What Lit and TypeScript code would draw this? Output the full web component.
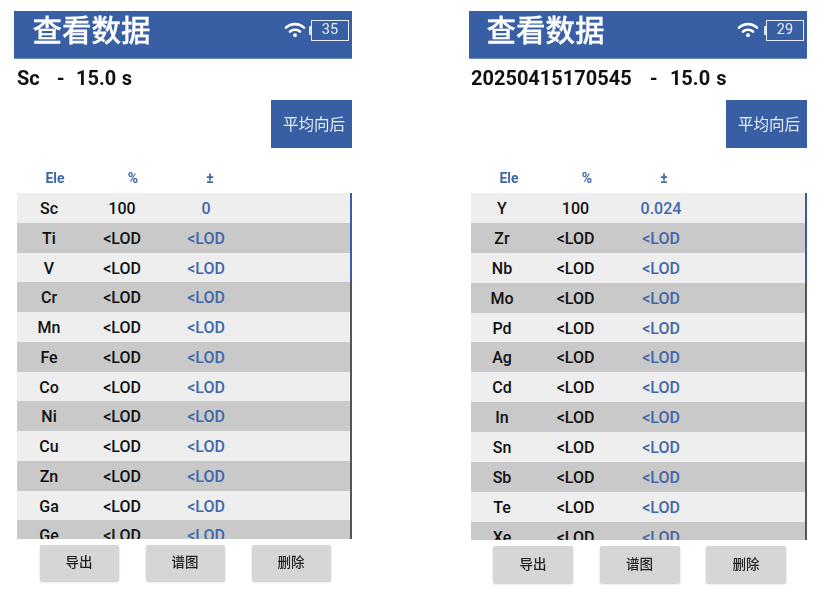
import { LitElement, html, css } from "lit";
import { customElement, property } from "lit/decorators.js";

@customElement("data-panel")
class DataPanel extends LitElement {
  @property() name = "";
  @property() battery = "";
  @property({ type: Array }) rows: [string, string, string][] = [];
  @property({ type: Boolean }) wide = false;

  static styles = css`
    :host { display: block; width: 338px; font-family: Roboto, "Noto Sans CJK SC", sans-serif; color: #111; }
    .bar { height: 48px; background: #385ea3; display: flex; align-items: center; padding: 0 3px 0 19px; box-sizing: border-box; color: #fff; border-bottom: 1px solid #6d8abd; }
    .title { font: 500 29.5px/1 "Noto Sans CJK SC", sans-serif; flex: 1; margin: -12px 0 0 -0.5px; -webkit-text-stroke: 0.3px #fff; }
    .wide .title { margin-left: -1.5px; }
    .status { display: flex; align-items: center; margin-top: -9px; }
    .wifi { width: 22px; height: 16px; }
    .cap { width: 2px; height: 9px; background: #dfe6f2; margin-left: 3px; border-radius: 1px 0 0 1px; }
    .wide .cap { margin-left: 5px; }
    .batt { width: 38px; height: 21px; border: 1.5px solid #e8edf6; box-sizing: border-box; font: 400 14.5px/18px Roboto, sans-serif; text-align: center; color: #e8edf6; }
    .sub { font: 700 20px/22px Roboto, sans-serif; height: 41px; padding: 8px 0 0 3px; box-sizing: border-box; white-space: pre; word-spacing: 0.7px; }
    .wide .sub { padding-left: 2px; word-spacing: 1.1px; }
    .avgrow { display: flex; justify-content: flex-end; }
    .avg { width: 81px; height: 48px; box-sizing: border-box; padding: 0 0 2px 5px; background: #385ea3; color: #e9eef7; font: 400 15.5px/46px "Noto Sans CJK SC", sans-serif; text-align: center; }
    .head { display: grid; grid-template-columns: 76px 80px 74px; margin: 22px 0 0 3px; padding-top: 1px; height: 23px; box-sizing: border-box; color: #4267a8; font: 700 14px/15px Roboto, sans-serif; text-align: center; }
    .wide .head, .wide .table { margin-left: 2px; }
    .table { margin-left: 3px; height: 346px; overflow: hidden; position: relative; }
    .wide .table { height: 347px; }
    .row { display: grid; grid-template-columns: 64px 82px 86px; height: 29.75px; font: 500 16px/31px Roboto, sans-serif; text-align: center; background: #eeeeee; color: #111; }
    .wide .row { grid-template-columns: 62px 85px 86px; height: 29.9px; }
    .row:nth-child(even) { background: #c9c9c9; }
    .row span:nth-child(3) { color: #4267a8; }
    .track { position: absolute; right: 0; top: 0; bottom: 0; width: 2px; background: #555; }
    .thumb { width: 100%; height: 89px; background: #385ea3; }
    .actions { display: flex; justify-content: center; gap: 27px; padding: 6px 0 0 4px; }
    .wide .actions { gap: 26.5px; padding-left: 3px; }
    .btn { width: 79px; height: 36px; background: #d6d6d6; border-radius: 2px; box-shadow: 0 1px 2px rgba(0,0,0,.22); font: 500 13.5px/33px "Noto Sans CJK SC", sans-serif; text-align: center; color: #222; }
    .wide .btn { width: 80px; height: 37px; line-height: 34px; }
  `;

  render() {
    return html`<div class=${this.wide ? "wide" : ""}>
      <div class="bar">
        <div class="title">查看数据</div>
        <div class="status">
          <svg class="wifi" viewBox="0 0 22 16" fill="none" stroke="#fff" stroke-width="2.6" stroke-linecap="round">
            <path d="M2 5.6C7 1 15 1 20 5.6" />
            <path d="M6 9.6C8.8 7.2 13.2 7.2 16 9.6" />
            <circle cx="11" cy="13.2" r="1.9" fill="#fff" stroke="none" />
          </svg>
          <div class="cap"></div>
          <div class="batt">${this.battery}</div>
        </div>
      </div>
      <div class="sub">${this.name}   -  15.0 s</div>
      <div class="avgrow"><div class="avg">平均向后</div></div>
      <div class="head"><span>Ele</span><span>%</span><span>±</span></div>
      <div class="table">
        <div>
          ${this.rows.map((r) => html`<div class="row"><span>${r[0]}</span><span>${r[1]}</span><span>${r[2]}</span></div>`)}
        </div>
        <div class="track"><div class="thumb"></div></div>
      </div>
      <div class="actions">
        <div class="btn">导出</div><div class="btn">谱图</div><div class="btn">删除</div>
      </div>
    </div>`;
  }
}

const lod = (els: string[], first: [string, string, string]): [string, string, string][] =>
  [first, ...els.map((e): [string, string, string] => [e, "<LOD", "<LOD"])];

@customElement("app-root")
class AppRoot extends LitElement {
  static styles = css`
    :host { display: block; width: 837px; height: 616px; background: #fff; overflow: hidden; }
    .page { display: flex; gap: 117px; padding: 11px 0 0 14px; filter: blur(0.35px); }
  `;
  render() {
    const a = lod(["Ti","V","Cr","Mn","Fe","Co","Ni","Cu","Zn","Ga","Ge"], ["Sc","100","0"]);
    const b = lod(["Zr","Nb","Mo","Pd","Ag","Cd","In","Sn","Sb","Te","Xe"], ["Y","100","0.024"]);
    return html`<div class="page">
      <data-panel name="Sc" battery="35" .rows=${a}></data-panel>
      <data-panel name="20250415170545" battery="29" .rows=${b} wide></data-panel>
    </div>`;
  }
}
